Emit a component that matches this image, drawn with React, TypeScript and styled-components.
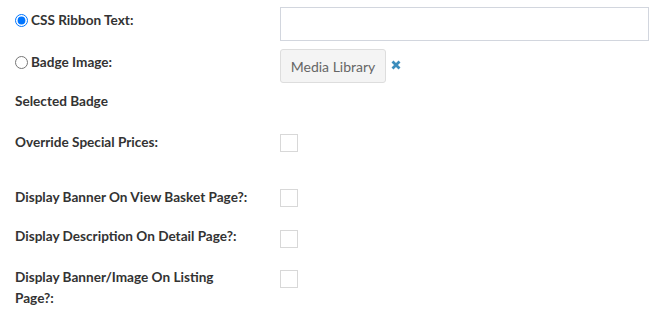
import React from 'react'
import styled, { createGlobalStyle } from 'styled-components'

const GlobalStyle = createGlobalStyle`
  html, body {
    margin: 0;
    padding: 0;
    background: #fff;
  }
`

const Page = styled.div`
  width: 656px;
  height: 318px;
  overflow: hidden;
  font-family: 'Lato', 'Liberation Sans', sans-serif;
  color: #333;
`

const Form = styled.form`
  display: flex;
  flex-direction: column;
  margin-top: -34px;
  padding-left: 15px;
`

const Row = styled.div<{ $top?: number }>`
  display: grid;
  grid-template-columns: 265px 369px;
  align-items: start;
  margin-top: ${p => p.$top ?? 0}px;
`

const Label = styled.label<{ $pad?: number }>`
  display: flex;
  align-items: flex-start;
  padding-top: ${p => p.$pad ?? 0}px;
  font-size: 13.6px;
  font-weight: 700;
  line-height: 21px;
  width: 236px;
`

const Radio = styled.input`
  width: 13px;
  height: 13px;
  margin: 4px 3px 0 0;
  flex: none;
`

const TextInput = styled.input`
  box-sizing: border-box;
  width: 369px;
  height: 34px;
  border: 1px solid #d2d6de;
  border-radius: 0;
  padding: 6px 12px;
  font-size: 14px;
  outline: none;
`

const Controls = styled.div`
  display: flex;
  align-items: center;
  gap: 5px;
`

const Button = styled.button`
  box-sizing: border-box;
  height: 34px;
  width: 106px;
  padding: 0;
  white-space: nowrap;
  background: #f4f4f4;
  border: 1px solid #ddd;
  border-radius: 3px;
  color: #666;
  font-family: 'Lato', 'Liberation Sans', sans-serif;
  font-size: 14px;
`

const Remove = styled.svg`
  width: 10px;
  height: 10px;
  margin-top: -2px;
`

const Check = styled.input`
  appearance: none;
  box-sizing: border-box;
  width: 18px;
  height: 18px;
  margin: 4px 0 0;
  border: 1px solid #d8d8d8;
  background: #fff;
`

export default function App() {
  return (
    <Page>
      <GlobalStyle />
      <Form>
        <Row>
          <span />
          <TextInput type="text" aria-label="Ribbon colour" />
        </Row>
        <Row $top={7}>
          <Label $pad={3}>
            <Radio type="radio" name="badge" defaultChecked />
            CSS Ribbon Text:
          </Label>
          <TextInput type="text" />
        </Row>
        <Row $top={8}>
          <Label $pad={3}>
            <Radio type="radio" name="badge" />
            Badge Image:
          </Label>
          <Controls>
            <Button type="button">Media Library</Button>
            <Remove viewBox="0 0 10 10">
              <path d="M1.5 1.5 L8.5 8.5 M8.5 1.5 L1.5 8.5" stroke="#3c8dbc" strokeWidth="2.8" strokeLinecap="butt" />
            </Remove>
          </Controls>
        </Row>
        <Row $top={7}>
          <Label $pad={1}>Selected Badge</Label>
        </Row>
        <Row $top={18}>
          <Label $pad={2}>Override Special Prices:</Label>
          <Check type="checkbox" />
        </Row>
        <Row $top={32}>
          <Label $pad={2}>Display Banner On View Basket Page?:</Label>
          <Check type="checkbox" />
        </Row>
        <Row $top={18}>
          <Label>Display Description On Detail Page?:</Label>
          <Check type="checkbox" />
        </Row>
        <Row $top={18}>
          <Label $pad={1}>Display Banner/Image On Listing Page?:</Label>
          <Check type="checkbox" />
        </Row>
      </Form>
    </Page>
  )
}
